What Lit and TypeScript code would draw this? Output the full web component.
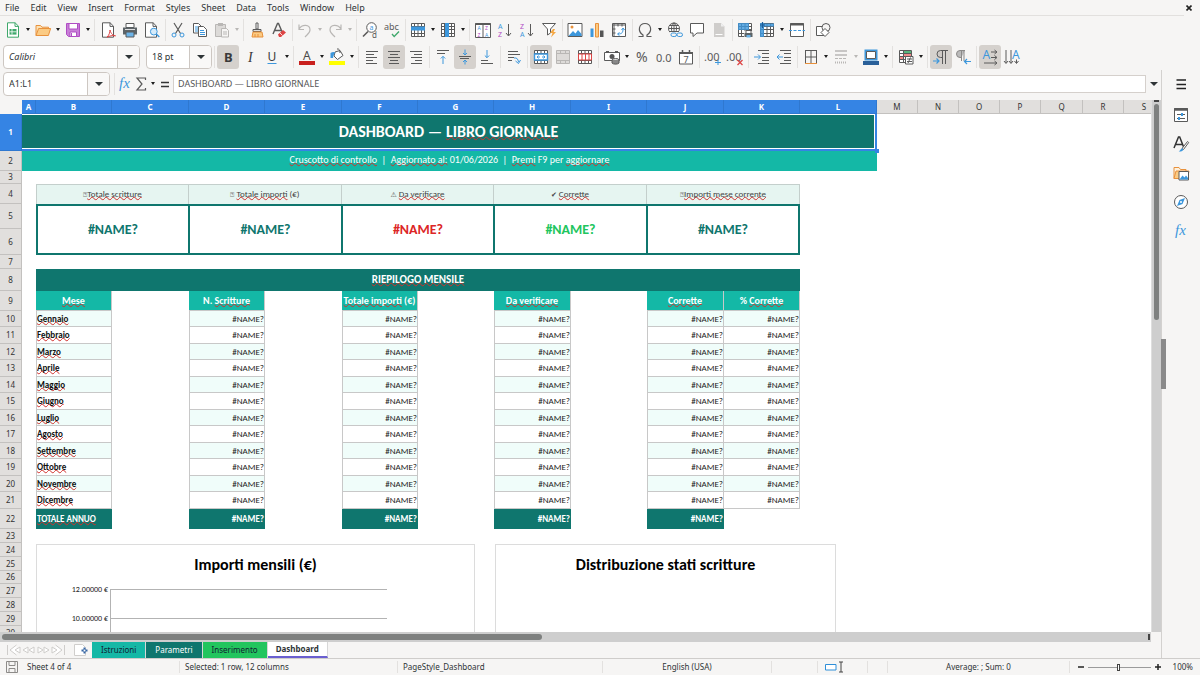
import { LitElement, html, css, svg, nothing, TemplateResult } from "lit";
import { customElement, property } from "lit/decorators.js";
import { styleMap } from "lit/directives/style-map.js";
import { classMap } from "lit/directives/class-map.js";

const K = "#5a5a5a";
const B = "#3d97dc";
const O = "#e8913c";
const R = "#dd4444";
const P = "#b04cc4";
const G = "#3fa86b";
const L = "#b9b7b5";

const lines = (rows: number[][], color = K) =>
  rows.map(([x1, x2, y]) => svg`<path d="M${x1} ${y}H${x2}" stroke=${color} fill="none"/>`);

const glyph = (text: string, x: number, y: number, size: number, color = K, extra = "") =>
  svg`<text x=${x} y=${y} font-size=${size} fill=${color} style=${"font-family:'Noto Sans',sans-serif;" + extra}>${text}</text>`;

const tableGrid = (color = K) => svg`
  <path d="M1.5 1.5h13v13h-13zM1.5 4.5h13M1.5 7.5h13M1.5 11.5h13M4.5 1.5v13M8 1.5v13M11.5 1.5v13" fill="#fff" stroke=${color}/>`;

const ICONS: Record<string, unknown> = {
  new: svg`<path d="M2.5.8h7.6l3.4 3.4v11H2.5z" fill="#fff" stroke="${G}"/><path d="M10 .8v3.6h3.5" fill="none" stroke="${G}"/><path d="M4.5 7h7v5.6h-7z" fill="${G}"/><path d="M4.5 9.8h7M7 7v5.6" stroke="#fff" stroke-width=".8"/>`,
  open: svg`<path d="M1 13.5V3.5h4.5l1.5 1.7h6.5v2" fill="#fce2b6" stroke="${O}"/><path d="M1 13.5l2.6-7h12l-2.2 7z" fill="#fbcb84" stroke="${O}"/>`,
  save: svg`<path d="M1.5 1.5h13v13h-11l-2-2z" fill="#c77fd6" stroke="${P}"/><path d="M4 1.5h8.500v5.500H4z" fill="#fff" stroke="${P}"/><path d="M5 10h6.500v4.500H5z" fill="#fff" stroke="${P}"/><path d="M6.500 11v3" stroke="${P}"/>`,
  pdf: svg`<path d="M2.5.8h7.600l3.400 3.400v11H2.500z" fill="#fff" stroke="${K}"/><path d="M10 .8v3.600h3.500" fill="none" stroke="${K}"/><path d="M7 15.200c2-2 3-4.700 3-7.200 1 4 3 5.500 5.500 5.800-3-.7-6 .2-8.500 1.400z" fill="#fff" stroke="${R}"/>`,
  print: svg`<path d="M4 1.5h8v4H4z" fill="#fff" stroke="${K}"/><path d="M1 5.500h14v7H1z" fill="#5d6468"/><path d="M3 7.500h10" stroke="#fff" stroke-width=".8"/><path d="M4 10h8v5H4z" fill="#6db4e8" stroke="${K}"/>`,
  preview: svg`<path d="M1.500.8h7.600l3.400 3.400v11h-11z" fill="#fff" stroke="${K}"/><path d="M9 .8v3.600h3.500" fill="none" stroke="${K}"/><circle cx="9.800" cy="9.600" r="3.400" fill="#d6ebfa" stroke="${B}"/><path d="M12.300 12l3 3" stroke="${B}" stroke-width="1.400"/>`,
  cut: svg`<path d="M4 1l6.500 10.500M12 1L5.500 11.500" stroke="${K}" fill="none" stroke-width="1.200"/><circle cx="4" cy="13" r="2" fill="none" stroke="${B}"/><circle cx="12" cy="13" r="2" fill="none" stroke="${B}"/>`,
  copy: svg`<path d="M1.500 1.500h5l2.500 2.500v7h-7.500z" fill="#fff" stroke="${K}"/><path d="M3 5h3M3 7h3M3 9h3" stroke="${B}"/><path d="M6.500 4.500h5l3 3v7h-8z" fill="#fff" stroke="${K}"/><path d="M8 8.500h4M8 10.500h5M8 12.500h5" stroke="${B}"/>`,
  paste: svg`<path d="M1.500 2.500h10v12h-10z" fill="#dcdad8" stroke="${L}"/><path d="M4 1h5v3H4z" fill="${L}"/><path d="M7.500 6.500h5l2 2v6.500h-7z" fill="#f6f5f4" stroke="${L}"/><path d="M9 10h4M9 12h4" stroke="${L}"/>`,
  brush: svg`<path d="M7 1h2v6H7z" fill="#fff" stroke="${K}"/><path d="M4 7.500h8v2H4z" fill="#ddd" stroke="${K}"/><path d="M4 10l-1 5h11l-1-5z" fill="#fbcb84" stroke="${O}"/><path d="M6 12v3M9 12v3" stroke="${O}"/>`,
  clear: svg`<path d="M2 12L6.500 1.500h1L12 12M3.500 8.500h7" stroke="${K}" stroke-width="1.400" fill="none"/><path d="M7 12.500l5-4.500 3 2.500-5 4.500H8z" fill="${R}"/><path d="M9 11l2.500 2.500" stroke="#fff" stroke-width=".8"/>`,
  undo: svg`<path d="M2 2.500v5h5M2 7c3-5 11-5 11 1 0 3-2.500 4.500-5 7" fill="none" stroke="${L}" stroke-width="1.200"/>`,
  redo: svg`<path d="M14 2.500v5H9M14 7C11 2 3 2 3 8c0 3 2.500 4.500 5 7" fill="none" stroke="${L}" stroke-width="1.200"/>`,
  find: svg`<circle cx="9.500" cy="5.500" r="4.800" fill="#fff" stroke="${K}"/><path d="M6 9.500l-5 5" stroke="${K}" stroke-width="1.600"/>${glyph("a", 7.5, 7.5, 7, B)}${glyph("d", 10, 15.5, 8)}`,
  spell: svg`${glyph("abc", 0, 8, 9)}<path d="M8 12l2.200 2.500L15 9.500" fill="none" stroke="${G}" stroke-width="1.300"/>`,
  row: svg`${tableGrid()}<path d="M1 4.500h14v4H1z" fill="${B}"/>`,
  col: svg`${tableGrid()}<path d="M5 1h4v14H5z" fill="${B}"/>`,
  sort: svg`<path d="M.5 1.500h15v14H.5zM8 1.500v14" fill="#fff" stroke="${K}"/><path d="M.5 2h15" stroke="${K}" stroke-width="2"/>${glyph("A", 2.5, 8, 5, B)}${glyph("Z", 2.5, 14.5, 5, P)}${glyph("Z", 10, 8, 5, P)}${glyph("A", 10, 14.5, 5, B)}`,
  az: svg`${glyph("A", 1, 6.5, 7, B)}${glyph("Z", 1, 15, 7, P)}<path d="M11.500 2v11.500M9 11l2.500 3 2.500-3" fill="none" stroke="${K}"/>`,
  za: svg`${glyph("Z", 1, 6.5, 7, P)}${glyph("A", 1, 15, 7, B)}<path d="M11.500 2v11.500M9 11l2.500 3 2.500-3" fill="none" stroke="${K}"/>`,
  filter: svg`<path d="M1.500 1.500h13L9.500 7v4L6.500 13V7z" fill="#fff" stroke="${K}"/><path d="M12 7l-3 4h2.500L10 15.500l5-5.500h-2.500L14 7z" fill="#f5a742"/>`,
  image: svg`<path d="M1 1.500h14v13H1z" fill="#fff" stroke="${K}"/><circle cx="5" cy="5" r="1.500" fill="${O}"/><path d="M1.500 14l4.500-5 2.500 2.500L11 8l3.500 4v2z" fill="${B}"/>`,
  chart: svg`<path d="M1.500 6.500h3v8.500h-3z" fill="${B}"/><path d="M6.500 1.500h3v13.500h-3z" fill="#fbcb84" stroke="${O}"/><path d="M11 8.500h3.500v6.500H11z" fill="#555"/>`,
  pivot: svg`<path d="M1.500 1.500h13v13h-13z" fill="#fff" stroke="${K}"/><path d="M1.500 3h13M3 1.500v13M7 1.500v3M11 1.500v3M1.500 7h3M1.500 11h3" stroke="${K}"/><path d="M7 12c4.500 0 5-2 5-5M10.500 8L12 6l1.700 2M8.500 10.500L6.500 12l2 1.700" fill="none" stroke="${B}"/>`,
  omega: svg`<path d="M1.500 14.500h4.500v-1.500C0 9 2 1.500 8 1.500s8 7.500 2 11.500v1.500h4.500" fill="none" stroke="${K}" stroke-width="1.200"/>`,
  link: svg`<circle cx="7" cy="6.500" r="5.500" fill="#fff" stroke="${K}"/><path d="M1.500 6.500h11M7 1v11M3 3.500h8M3 9.500h8" stroke="${K}" fill="none"/><ellipse cx="7" cy="6.500" rx="2.500" ry="5.500" fill="none" stroke="${K}"/><path d="M3 10h13v5.500H3z" fill="#f6f5f4"/><rect x="4" y="11" width="5.500" height="3.500" rx="1.700" fill="none" stroke="${B}"/><rect x="10" y="11" width="5.500" height="3.500" rx="1.700" fill="none" stroke="${B}"/>`,
  comment: svg`<path d="M1.500 1.500h13v9.500H8l-4 3.500V11H1.500z" fill="#fff" stroke="${K}"/>`,
  header: svg`<path d="M3 1h7l3.500 3.500V15H3z" fill="#cfcdcb"/><path d="M10 1v3.500h3.500" fill="#eee"/><path d="M4.500 12.500h7" stroke="#fff"/>`,
  area: svg`${tableGrid()}<path d="M1 1h11v7H1z" fill="${B}" opacity=".8"/><path d="M7 9h9v7H7z" fill="#f6f5f4"/><path d="M9 8.500h5v3H9z" fill="#fff" stroke="${K}"/><path d="M7.500 11h8v4h-8z" fill="#5d6468"/><path d="M9.500 13h4v2.500h-4z" fill="#6db4e8"/>`,
  freeze: svg`${tableGrid()}<path d="M1 1.500h14v3H1zM1 1h4v14H1z" fill="${B}" opacity=".85"/><path d="M1 3h5M3.500 0v6" stroke="#1b5d99" stroke-width="1.200"/>`,
  split: svg`<path d="M1.500 1.500h13v13h-13z" fill="#fff" stroke="${K}"/><path d="M1 2.500h14" stroke="${K}" stroke-width="2"/><path d="M0 8.500h16" stroke="${B}" stroke-dasharray="3 1.500"/>`,
  shapes: svg`<path d="M1.500 4.500h8v9h-8z" fill="#fff" stroke="${K}"/><circle cx="11" cy="5.500" r="4" fill="#f6f5f4" stroke="${K}"/><path d="M10 6.500l4 4-4 4-4-4z" fill="#fff" stroke="${K}"/>`,
  bold: glyph("B", 4, 13, 13, "#3a3a3a", "font-weight:700"),
  italic: glyph("I", 6, 13, 14, "#3a3a3a", "font-family:'Liberation Serif',serif;font-style:italic"),
  underline: svg`${glyph("U", 3.5, 11.5, 12, "#3a3a3a")}<path d="M3.500 14.500h9" stroke="${B}"/>`,
  color: svg`${glyph("A", 4, 10.500, 12, "#4a4a4a")}<path d="M0 12h16v4H0z" fill="#c9211e"/>`,
  fill: svg`<path d="M6 3l5-1.500 3 5-5.500 4L5 7z" fill="#fff" stroke="${K}"/><path d="M8 0c2-.5 3 1 3 4" fill="none" stroke="${K}"/><path d="M1.500 9V4c2-1.500 4-1.500 5 0-1.500 0-2 2-2.500 5z" fill="${B}"/><path d="M0 12h16v4H0z" fill="#ffff00"/>`,
  left: svg`${lines([[2, 14, 2.5], [2, 10, 5.5], [2, 13, 8.5], [2, 9, 11.5], [2, 13, 14.5]])}`,
  center: svg`${lines([[2, 14, 2.5], [4, 12, 5.5], [2, 14, 8.5], [4, 12, 11.5], [3, 13, 14.5]])}`,
  right: svg`${lines([[2, 14, 2.5], [6, 14, 5.5], [3, 14, 8.5], [7, 14, 11.5], [3, 14, 14.5]])}`,
  top: svg`${lines([[2, 14, 1.5], [2, 10, 4.5]])}<path d="M8 15V7.500M5.800 9.500L8 7.300l2.200 2.200" fill="none" stroke="${B}"/>`,
  middle: svg`${lines([[2, 14, 7.5], [3, 12, 9.5]])}<path d="M8 .5v5M6 4l2 2 2-2M8 15.500v-4M6 13l2-2 2 2" fill="none" stroke="${B}"/>`,
  bottom: svg`${lines([[2, 9, 11.5], [2, 14, 14.5]])}<path d="M8 1v7.500M5.800 6.500L8 8.700l2.200-2.200" fill="none" stroke="${B}"/>`,
  wrap: svg`${lines([[2, 12, 2.5], [2, 14, 5.5], [2, 8, 8.5], [2, 6, 11.5]])}<path d="M8 9c3-.5 4 1 4.500 4M9.500 12l3 2.500 2-3.500" fill="none" stroke="${B}"/>`,
  merge: svg`${tableGrid()}<path d="M1.500 5h13v6h-13z" fill="#fff" stroke="${B}" stroke-width="1.400"/><path d="M4 8h3M9 8h3M5.500 6.500L4 8l1.500 1.500M10.500 6.500L12 8l-1.500 1.500" fill="none" stroke="${B}"/>`,
  merge2: svg`<path d="M1.500 1.500h13v13h-13zM1.500 4.500h13M1.500 11.500h13M5.500 1.500v3M10.500 1.500v3M5.500 11.500v3M10.500 11.500v3" fill="#dddbd9" stroke="${L}"/>`,
  unmerge: svg`${tableGrid()}<path d="M1.500 5h13v6h-13zM5 5v6M8.500 5v6M12 5v6" fill="#fff" stroke="${R}"/>`,
  currency: svg`<path d="M.5 3.500h15v8H.5z" fill="#fff" stroke="${K}"/><path d="M2 2.500h3M11 2.500h3" stroke="${K}"/><circle cx="8" cy="7.500" r="2.500" fill="#555"/><ellipse cx="11.500" cy="11" rx="3.500" ry="1.500" fill="#ddd" stroke="${K}"/><path d="M8 11v3c1 1.500 6 1.500 7 0v-3" fill="#888" stroke="${K}"/>`,
  percent: glyph("%", 2, 13, 14),
  number: glyph("0.0", 0, 13, 11),
  date: svg`<path d="M1.500 3.500h13v11.500h-13z" fill="#fff" stroke="${K}"/><path d="M1 4h14" stroke="${K}" stroke-width="2"/><path d="M4.500 1v3M11.500 1v3" stroke="${K}" stroke-width="1.500"/>${glyph("7", 5.5, 13.500, 9)}`,
  addDec: svg`${glyph(".00", -1, 12, 11)}<path d="M10 13.500h6M13 11v5" stroke="${B}"/>`,
  delDec: svg`${glyph(".00", -1, 12, 11)}<path d="M10.500 11l5 5M15.500 11l-5 5" stroke="${R}" stroke-width="1.300"/>`,
  indent: svg`${lines([[4, 15, 1.5], [8, 15, 4.5], [8, 15, 8.5], [8, 15, 11.5], [4, 15, 14.5]])}<path d="M0 8h6M4 5.500L6.500 8 4 10.500" fill="none" stroke="${B}"/>`,
  outdent: svg`${lines([[4, 15, 1.5], [8, 15, 4.5], [8, 15, 8.5], [8, 15, 11.5], [4, 15, 14.5]])}<path d="M1 8h6M3.500 5.500L1 8l2.500 2.500" fill="none" stroke="${B}"/>`,
  border: svg`<path d="M2.500 2v12.500M13.500 2v12.500M2 1.500h12M2.500 8h11M8 2v12.500" fill="none" stroke="${K}"/><path d="M2 14.500h12" stroke="${O}"/>`,
  lineStyle: svg`<path d="M2 2h12M2 6h12" stroke="${L}" stroke-width="1.500"/><path d="M2 9.500h12" stroke="${L}" stroke-dasharray="3 1"/><path d="M2 13.500h12" stroke="${L}" stroke-width="2" stroke-dasharray="1 1"/>`,
  lineColor: svg`<path d="M2.500 1.500h11v9h-11z" fill="#fff" stroke="${B}" stroke-width="2"/><path d="M3.500 2.500h9v7h-9z" fill="#fff" stroke="${K}"/><path d="M0 12h16v4H0z" fill="#2a6099"/>`,
  cond: svg`<path d="M1.500 1.500h12v12h-12zM1.500 4.500h12M1.500 7.500h12M1.500 10.500h12M5.500 1.500v12M9.500 1.500v12" fill="#fff" stroke="${K}"/><path d="M6 2h7v2H6z" fill="#59b67d"/><path d="M6 5h7v2H6z" fill="#f08a8a"/><path d="M2 8h3v2H2z" fill="#f08a8a"/><path d="M7.500 7.500h7.500V15H7.500z" fill="#fff" stroke="${K}"/><path d="M9 10h5M9 12.500h5M12.500 8.500l-2.500 5.500" stroke="${K}"/>`,
  ltr: svg`<path d="M9.500 1.500h-2a3.500 3.500 0 000 7h2z" fill="#cfcac6" stroke="${K}"/><path d="M9 1.500h6M9.500 1.500V15M12.500 1.500V15" fill="none" stroke="${K}"/><path d="M0 12h5.500M3.500 9.500L6 12l-2.500 2.500" fill="none" stroke="${B}" stroke-width="1.200"/>`,
  rtl: svg`<path d="M10 1.500H5a3.500 3.500 0 000 7h1.500M6.500 1.500V12M9 1.500V12" fill="#bbb" stroke="#8b8988"/><path d="M9.500 12.500H16M12 10l-2.500 2.500L12 15" fill="none" stroke="${B}" stroke-width="1.200"/>`,
  dirH: svg`${glyph("A", 0.5, 9.5, 12, B)}<path d="M9 3h5.500M9 8.500h5.500M2 14h12.500M12.500 1L15 3l-2.500 2M12.500 6.500l2.500 2-2.500 2M12.500 12l2.500 2-2.500 2" fill="none" stroke="${K}"/>`,
  dirV: svg`${glyph("A", 8, 9.5, 12, B)}<path d="M2 1v13M7 1v13M12.500 10.500V14M0 12l2 2.500L4 12M5 12l2 2.500L9 12M10.500 12l2 2.500 2-2.500" fill="none" stroke="${K}"/>`,
  fx: svg`${glyph("fx", 2, 12, 15, B, "font-family:'Liberation Serif',serif;font-style:italic")}`,
  sigma: svg`<path d="M12.500 4V2H4l5 6-5 6h8.500V12" fill="none" stroke="${K}" stroke-width="1.200"/>`,
  equal: svg`<path d="M4 6.500h8M4 10.500h8" stroke="#333" stroke-width="1.600"/>`,
  burger: svg`<path d="M3.500 4h9.500M3.500 8.500h9.500M3.500 12.500h9.500" stroke="#222" stroke-width="1.500"/>`,
  props: svg`<path d="M1.500 1.500h13v13h-13z" fill="#fff" stroke="${K}"/><path d="M1 2.500h14" stroke="${K}" stroke-width="2.500"/><path d="M4 7.500h8M4 11.500h8" stroke="${K}"/><path d="M9 6v3M6 10v3" stroke="${B}" stroke-width="2"/>`,
  styles: svg`<path d="M1 12L5.500 1h1.200L11 12M2.800 8.500h6.500" stroke="#333" stroke-width="1.500" fill="none"/><path d="M9 12.500l5.500-7 1.200 1-5.200 7z" fill="#fff" stroke="${K}"/><path d="M5 15.500c2.500 0 2.500-3.500 4.500-3 2 1 .5 3.500-4.500 3z" fill="${B}"/>`,
  gallery: svg`<path d="M1 13.500V2.500h5L7.500 4.500H13v2" fill="#fdf0dc" stroke="${O}"/><path d="M1 13.500l2-7.500h13l-1.500 7.500z" fill="#fbcb84" stroke="${O}"/><path d="M6 6.500h9.500V15H6z" fill="#fff" stroke="${K}"/><path d="M6.500 14.500l3-4 2 2 1.500-2 2 2.500v1.500z" fill="${B}"/>`,
  compass: svg`<circle cx="8" cy="8" r="6.500" fill="#fff" stroke="${K}"/><path d="M12 4l-2.500 6L4 12l2.500-6z" fill="${B}"/><circle cx="8" cy="8" r="1" fill="#fff"/>`,
  doc: svg`<path d="M2.500 2.500h11v11h-11zM5 2.500v4h6v-4M5 13.500V9.500h6v4" fill="none" stroke="#8d8b89"/>`,
};

const icon = (name: string) =>
  html`<svg class="icon" viewBox="0 0 16 16" width="16" height="16" aria-hidden="true">${ICONS[name]}</svg>`;

const BAR_STYLES = css`
  .icon { display: block; flex: none; overflow: visible; }
  button { font: inherit; color: inherit; background: none; border: 0; padding: 0; margin: 0; }
  .tool { width: 22px; height: 24px; display: grid; place-items: center; border-radius: 3px; }
  .tool.on { background: #d5d1cd; }
  .drop { width: 8px; height: 24px; display: grid; place-items: center; }
  .drop::before { content: ""; border: 2px solid transparent; border-top: 3px solid #1d1d1d; border-bottom: 0; }
  .drop.dim::before { border-top-color: #b9b7b5; }
  .sep { width: 5px; height: 22px; display: flex; justify-content: center; }
  .sep::before { content: ""; width: 1px; background: #e3e1df; }
`;

// "|" is a separator, a trailing "v" adds a drop-down arrow, "x" a disabled one, "*" a pressed state
@customElement("tool-strip")
class ToolStrip extends LitElement {
  @property() items = "";
  static styles = [
    BAR_STYLES,
    css`
      :host { display: flex; align-items: center; }
      :host([tight]) .tool + .sep { width: 4px; }
    `,
  ];
  render() {
    return this.items.split(" ").map((raw) => {
      if (raw === "|") return html`<span class="sep"></span>`;
      const [name, flag = ""] = raw.split(":");
      return html`<button class=${classMap({ tool: true, on: flag === "*" })} aria-label=${name}>${icon(name)}</button>
        ${flag === "v" || flag === "x"
          ? html`<button class=${classMap({ drop: true, dim: flag === "x" })} aria-label=${name + " options"}></button>`
          : nothing}`;
    });
  }
}

const COLS: [string, number][] = [
  ["A", 14], ["B", 76], ["C", 77], ["D", 76], ["E", 77], ["F", 76], ["G", 76], ["H", 77], ["I", 76], ["J", 77],
  ["K", 76], ["L", 77], ["M", 41], ["N", 41], ["O", 41], ["P", 41], ["Q", 42], ["R", 41], ["S", 41],
];
const HEIGHTS = [37, 20, 13, 20, 25, 26, 14, 22, 20, 16, 17, 16, 17, 16, 17, 16, 17, 16, 17, 16, 17, 20, 14, 14, 14, 13, 14, 14, 14, 14];
const MONTHS = ["Gennaio", "Febbraio", "Marzo", "Aprile", "Maggio", "Giugno", "Luglio", "Agosto", "Settembre", "Ottobre", "Novembre", "Dicembre"];

const w = (t: string) => html`<span class="wavy">${t}</span>`;
const KPIS: [TemplateResult, string][] = [
  [html`<i class="sym">⍰</i>${w("Totale scritture")}`, "teal"],
  [html`<i class="sym">⍰</i> ${w("Totale importi")} (€)`, "teal"],
  [html`<i class="sym">⚠</i> ${w("Da verificare")}`, "red"],
  [html`<i class="sym">✔</i> ${w("Corrette")}`, "green"],
  [html`<i class="sym">⍰</i>${w("Importi mese corrente")}`, "teal"],
];

@customElement("sheet-grid")
class SheetGrid extends LitElement {
  static styles = css`
    :host { display: block; position: relative; overflow: hidden; background: #fff; font-family: Carlito, Lato, sans-serif; }
    table { table-layout: fixed; width: 0; border-collapse: separate; border-spacing: 0; }
    th, td { box-sizing: border-box; padding: 0; overflow: hidden; white-space: nowrap; line-height: 12px; }
    thead th, .num { font: 400 8px/12px "Noto Sans", sans-serif; color: #333; background: #e1dfdd; border-right: 1px solid #c3c1bf; border-bottom: 1px solid #c3c1bf; text-align: center; }
    thead th { height: 14px; }
    .corner { background: #f6f5f4; border-color: #f6f5f4; }
    thead .sel, .num.sel { background: #3584e4; color: #fff; font-weight: 700; border-color: #2f78d0; }
    .wavy { text-decoration: underline wavy #d0302c 1px; text-decoration-skip-ink: none; text-underline-offset: -1px; }
    .title { background: #0f766e; color: #fff; font-size: 16px; font-weight: 700; line-height: 20px; text-align: center; border-bottom: 2px solid #3584e4; border-right: 2px solid #3584e4; box-shadow: inset 0 1px #fff, inset -1px -1px #fff; }
    .sub { background: #14b8a6; color: #fff; font-size: 10px; text-align: center; padding-bottom: 2px; }
    .kpi-name { background: #e6f5f1; color: #444; font-size: 9px; text-align: center; border-top: 1px solid #c4cfcc; border-right: 1px solid #c4cfcc; padding-bottom: 2px; }
    .kpi-name.first { border-left: 1px solid #c4cfcc; }
    .sym { font: 7px "DejaVu Sans", sans-serif; }
    .kpi { font-size: 14px; font-weight: 700; line-height: 16px; text-align: center; border: solid #0f766e; border-width: 2px 1px; }
    .kpi.first { border-left-width: 2px; }
    .kpi.last { border-right-width: 2px; }
    .teal { color: #0f766e; }
    .red { color: #dc2626; }
    .green { color: #22c55e; }
    .band { background: #0f766e; color: #fff; font-size: 11px; font-weight: 700; text-align: center; }
    .head { background: #14b8a6; color: #fff; font-size: 10px; font-weight: 700; text-align: center; }
    .cell { border-right: 1px solid #c8c8c8; border-bottom: 1px solid #c8c8c8; }
    .lead { border-left: 1px solid #c8c8c8; }
    .val { font-size: 9px; text-align: right; color: #222; }
    .month { font-size: 9px; font-weight: 700; color: #111; }
    .odd { background: #f0fdfa; }
    .total { background: #0f766e; color: #fff; font-size: 9px; font-weight: 700; text-align: right; padding-right: 1px; }
    .total.label { text-align: left; padding-left: 1px; }
    .handle { position: absolute; left: 875px; top: 49px; width: 4px; height: 4px; background: #3584e4; }
    .charts { position: absolute; left: 36px; top: 444px; display: flex; gap: 20px; }
    figure { margin: 0; box-sizing: border-box; border: 1px solid #dcdcdc; background: #fff; height: 220px; }
    .bar { width: 439px; }
    .pie { width: 341px; }
    figcaption { font-size: 16px; font-weight: 700; line-height: 18px; padding-top: 11px; text-align: center; color: #000; }
    .plot { margin: 9px 87px 0 23px; }
    .tick { display: grid; grid-template-columns: 48px 1fr; gap: 2px; height: 29px; font-size: 8px; line-height: 12px; text-align: right; color: #222; }
    .tick::after { content: ""; margin-top: 6px; height: 29px; border-top: 1px solid #b3b3b3; border-left: 1px solid #b3b3b3; box-sizing: border-box; }
  `;

  private rowCells(n: number) {
    if (n === 1) return html`<td class="title" colspan="12">DASHBOARD — ${w("LIBRO GIORNALE")}</td>`;
    if (n === 2)
      return html`<td class="sub" colspan="12">${w("Cruscotto di controllo")} &nbsp;|&nbsp; ${w("Aggiornato al:")} 01/06/2026 &nbsp;|&nbsp; ${w("Premi")} F9 per ${w("aggiornare")}</td>`;
    if (n === 4) return html`<td></td>${KPIS.map(([t], i) => html`<td class=${classMap({ "kpi-name": true, first: i === 0 })} colspan="2">${t}</td>`)}`;
    if (n === 5)
      return html`<td></td>${KPIS.map(
        ([, c], i) => html`<td class=${classMap({ kpi: true, [c]: true, first: i === 0, last: i === 4 })} colspan="2" rowspan="2">#NAME?</td>`
      )}`;
    if (n === 8) return html`<td></td><td class="band" colspan="10">${w("RIEPILOGO MENSILE")}</td>`;
    if (n === 9)
      return html`<td></td><td class="head cell">${w("Mese")}</td><td></td><td class="head cell">N. ${w("Scritture")}</td><td></td>
        <td class="head cell">${w("Totale importi")} (€)</td><td></td><td class="head cell">${w("Da verificare")}</td><td></td>
        <td class="head cell">${w("Corrette")}</td><td class="head cell">% ${w("Corrette")}</td>`;
    if (n >= 10 && n <= 21) {
      const odd = n % 2 === 0;
      const val = (lead: boolean) => html`<td class=${classMap({ cell: true, val: true, lead, odd })}>#NAME?</td>`;
      return html`<td></td><td class=${classMap({ cell: true, lead: true, month: true, odd })}>${w(MONTHS[n - 10])}</td>
        <td></td>${val(true)}<td></td>${val(true)}<td></td>${val(true)}<td></td>${val(true)}${val(false)}`;
    }
    if (n === 22) {
      const t = html`<td></td><td class="total">#NAME?</td>`;
      return html`<td></td><td class="total label">${w("TOTALE ANNUO")}</td>${t}${t}${t}${t}`;
    }
    return html`<td></td>`;
  }

  render() {
    return html`
      <table>
        <colgroup>
          <col style=${styleMap({ width: "22px" })} />
          ${COLS.map(([, width]) => html`<col style=${styleMap({ width: width + "px" })} />`)}
        </colgroup>
        <thead>
          <tr><th class="corner"></th>${COLS.map(([c], i) => html`<th scope="col" class=${i < 12 ? "sel" : ""}>${c}</th>`)}</tr>
        </thead>
        <tbody>
          ${HEIGHTS.map(
            (h, i) => html`<tr style=${styleMap({ height: h + "px" })}>
              <th scope="row" class=${classMap({ num: true, sel: i === 0 })}>${i + 1}</th>${this.rowCells(i + 1)}
            </tr>`
          )}
        </tbody>
      </table>
      <span class="handle"></span>
      <div class="charts">
        <figure class="bar">
          <figcaption>Importi mensili (€)</figcaption>
          <div class="plot"><div class="tick">12.00000 €</div><div class="tick">10.00000 €</div></div>
        </figure>
        <figure class="pie"><figcaption>Distribuzione stati scritture</figcaption></figure>
      </div>
    `;
  }
}

@customElement("app-root")
class AppRoot extends LitElement {
  static styles = [
    BAR_STYLES,
    css`
      :host { display: flex; flex-direction: column; height: 100vh; overflow: hidden; background: #f6f5f4; color: #2e3436; font: 9px/12px "Noto Sans", sans-serif; }
      input, select { font: inherit; color: inherit; margin: 0; min-width: 0; }
      .menus { display: flex; gap: 1px; box-sizing: border-box; height: 16px; padding-top: 1px; align-items: center; border-bottom: 1px solid #e2e0de; margin-right: 16px; flex: none; }
      .menus button { padding: 0 5px; }
      .menus .close { position: absolute; right: 6px; top: 3px; width: 10px; height: 10px; padding: 0; display: grid; place-items: center; }
      .strip { display: flex; align-items: center; height: 27px; padding-left: 2px; flex: none; }
      .strip.format { padding-left: 3px; }
      .combo { display: flex; box-sizing: border-box; height: 24px; border: 1px solid #cdc7c2; border-radius: 4px; background: #fff; overflow: hidden; }
      .combo select, .combo input { appearance: none; flex: 1; border: 0; background: none; padding: 0 5px; outline: 0; }
      .combo .open { width: 22px; border-left: 1px solid #cdc7c2; background: #f9f8f7; display: grid; place-items: center; }
      .arrow::before { content: ""; border: 4px solid transparent; border-top: 4px solid #2e3436; border-bottom: 0; }
      .family { width: 137px; margin-right: 6px; font-style: italic; }
      .size { width: 66px; }
      .work { flex: 1; min-height: 0; display: grid; grid-template-columns: 1fr 39px; }
      .left { min-width: 0; min-height: 0; display: flex; flex-direction: column; }
      .formula { display: flex; align-items: center; height: 27px; padding: 0 0 3px 3px; flex: none; }
      .name { width: 107px; margin-right: 2px; }
      .narrow { width: 16px; height: 24px; display: grid; place-items: center; }
      .formula .line { flex: 1; box-sizing: border-box; height: 18px; border: 1px solid #d5d0cc; background: #fff; padding: 0 4px; color: #555; outline: 0; }
      .expand { width: 15px; height: 18px; display: grid; place-items: center; }
      .body { flex: 1; min-height: 0; display: grid; grid-template-columns: 1fr 10px; grid-template-rows: 1fr 10px; }
      .trough { background: #cecece; }
      .vbar { padding: 0 2px; border-left: 1px solid #dedede; display: flex; flex-direction: column; }
      .vbar::before { content: ""; height: 2px; background: #444; margin-bottom: 2px; }
      .vbar i { height: 216px; border-radius: 3px; background: #7e807f; }
      .hbar { padding: 2px 1px 2px 2px; display: flex; justify-content: space-between; }
      .hbar i { width: 47%; border-radius: 3px; background: #7e807f; }
      .hbar::after { content: ""; width: 2px; background: #444; }
      .tabs { display: flex; height: 16px; align-items: stretch; flex: none; font-size: 8px; }
      .navs { display: block; margin: 0 8px 0 6px; }
      .add { width: 18px; display: grid; align-items: center; }
      .tab { padding: 0 9px; border-right: 1px solid #d7d7d7; }
      .tab.a { background: #14b8a6; color: #123; }
      .tab.b { background: #0f766e; color: #fff; }
      .tab.c { background: #22c55e; color: #123; }
      .tab.d { padding: 0 8px; background: #fff; font-weight: 700; border-bottom: 2px solid #6a5fd0; }
      .side { position: relative; border-left: 1px solid #d3d1cf; display: flex; flex-direction: column; align-items: center; }
      .side button { width: 28px; height: 29px; display: grid; place-items: center; }
      .side .top { height: 27px; margin-bottom: 3px; }
      .grip { position: absolute; left: -1px; top: 269px; width: 5px; height: 50px; background: #8a8a8a; }
      .status { flex: none; height: 16px; font-size: 8px; border-top: 1px solid #cfcdcb; display: grid; grid-template-columns: 22px 158px 218px 205px 169px 46px 50px 20px 1fr 92px 38px; align-items: center; }
      .status > * { border-right: 1px solid #e3e1df; padding-left: 5px; height: 12px; white-space: nowrap; box-sizing: border-box; }
      .status > .plain { border-right: 0; }
      .status .mid { text-align: center; padding: 0; }
      .status .pct { border: 0; padding: 0 7px 0 0; text-align: right; }
      .status .zoom { display: flex; align-items: center; gap: 3px; padding-left: 7px; border: 0; }
      .zoom input { appearance: none; flex: 1; height: 10px; background: linear-gradient(#9b9b9b, #9b9b9b) center / 100% 1px no-repeat; }
      .zoom input::-webkit-slider-thumb { appearance: none; width: 3px; height: 7px; box-sizing: border-box; border: 1px solid #444; background: #fff; }
      .zoom button { width: 8px; height: 12px; display: grid; place-items: center; }
    `,
  ];

  render() {
    return html`
      <nav class="menus">
        ${["File", "Edit", "View", "Insert", "Format", "Styles", "Sheet", "Data", "Tools", "Window", "Help"].map((m) => html`<button>${m}</button>`)}
        <button class="close" aria-label="Close"><svg width="6" height="6" viewBox="0 0 6 6"><path d="M.5.5l5 5M5.500.5l-5 5" stroke="#222" stroke-width="1.600" /></svg></button>
      </nav>
      <div class="strip">
        <tool-strip tight items="new:v open:v save:v | pdf print preview | cut copy paste:x | brush clear | undo:x redo:x | find spell | row:v col:v | sort az za filter | image chart pivot | omega:v link comment header | area freeze:v split | shapes"></tool-strip>
      </div>
      <div class="strip format">
        <div class="combo family"><select aria-label="Font name"><option>Calibri</option></select><button class="open arrow" aria-label="Font list"></button></div>
        <div class="combo size"><select aria-label="Font size"><option>18 pt</option></select><button class="open arrow" aria-label="Size list"></button></div>
        <tool-strip items="| bold:* italic underline:v | color:v fill:v | left center:* right | top middle:* bottom | wrap | merge:* merge2 unmerge | currency:v percent number date | addDec delDec | indent outdent | border:v lineStyle:x lineColor:v | cond:v | ltr:* rtl | dirH:* dirV"></tool-strip>
      </div>
      <div class="work">
        <div class="left">
          <div class="formula">
            <div class="combo name"><input aria-label="Name box" value="A1:L1" /><button class="open arrow" aria-label="Named ranges"></button></div>
            <span class="sep"></span>
            <button class="narrow" aria-label="Function wizard">${icon("fx")}</button>
            <button class="narrow" aria-label="Sum">${icon("sigma")}</button>
            <button class="drop" aria-label="Sum options"></button>
            <button class="narrow" aria-label="Formula">${icon("equal")}</button>
            <input class="line" aria-label="Input line" value="DASHBOARD — LIBRO GIORNALE" />
            <button class="expand arrow" aria-label="Expand input line"></button>
          </div>
          <div class="body">
            <sheet-grid></sheet-grid>
            <div class="trough vbar"><i></i></div>
            <div class="trough hbar"><i></i></div>
          </div>
          <div class="tabs">
            <svg class="navs" width="60" height="16" viewBox="0 0 60 16" fill="#fff" stroke="#cfcdcb" aria-hidden="true">
              <path d="M1.500 3v10M10.500 3L4 8l6.500 5M14 5l-5 3 5 3zM22 5l-5 3 5 3zM28 5l-5 3 5 3zM32 5l5 3-5 3zM38 5l5 3-5 3zM46 5l5 3-5 3zM49.500 3L56 8l-6.500 5M58.500 3v10" />
            </svg>
            <button class="add" aria-label="Add sheet"><svg width="14" height="14" viewBox="0 0 14 14"><path d="M.5 1.500h8l3 3v8H.5z" fill="#fff" stroke="#d0cecc" /><path d="M10.500 4.500v6M7.500 7.500h6" stroke="#3465a4" stroke-width="2" /><circle cx="10.500" cy="7.500" r="1" fill="#fff" /></svg></button>
            <button class="tab a">Istruzioni</button><button class="tab b">Parametri</button><button class="tab c">Inserimento</button><button class="tab d">Dashboard</button>
          </div>
        </div>
        <aside class="side">
          <button class="top" aria-label="Sidebar settings">${icon("burger")}</button>
          <button aria-label="Properties">${icon("props")}</button>
          <button aria-label="Styles">${icon("styles")}</button>
          <button aria-label="Gallery">${icon("gallery")}</button>
          <button aria-label="Navigator">${icon("compass")}</button>
          <button aria-label="Functions">${icon("fx")}</button>
          <span class="grip"></span>
        </aside>
      </div>
      <footer class="status">
        <span class="plain"><svg width="14" height="12" viewBox="1 2 14 12">${ICONS.doc}</svg></span>
        <span>Sheet 4 of 4</span>
        <span>Selected: 1 row, 12 columns</span>
        <span>PageStyle_Dashboard</span>
        <span class="mid">English (USA)</span>
        <span></span>
        <span><svg width="20" height="12" viewBox="0 0 20 12"><path d="M2.500 3.500h10.500v5.500H2.500z" fill="#fff" stroke="#2f8fd8" /><path d="M16 1h4M16 11h4M18 1v10" stroke="#444" /></svg></span>
        <span></span>
        <span class="mid">Average: ; Sum: 0</span>
        <span class="zoom">
          <button aria-label="Zoom out"><svg width="8" height="8" viewBox="0 0 8 8"><path d="M1 4h6" stroke="#222" stroke-width="1.500" /></svg></button>
          <input type="range" aria-label="Zoom" min="0" max="100" value="48" />
          <button aria-label="Zoom in"><svg width="8" height="8" viewBox="0 0 8 8"><path d="M1 4h6M4 1v6" stroke="#222" stroke-width="1.500" /></svg></button>
        </span>
        <span class="pct">100%</span>
      </footer>
    `;
  }
}
